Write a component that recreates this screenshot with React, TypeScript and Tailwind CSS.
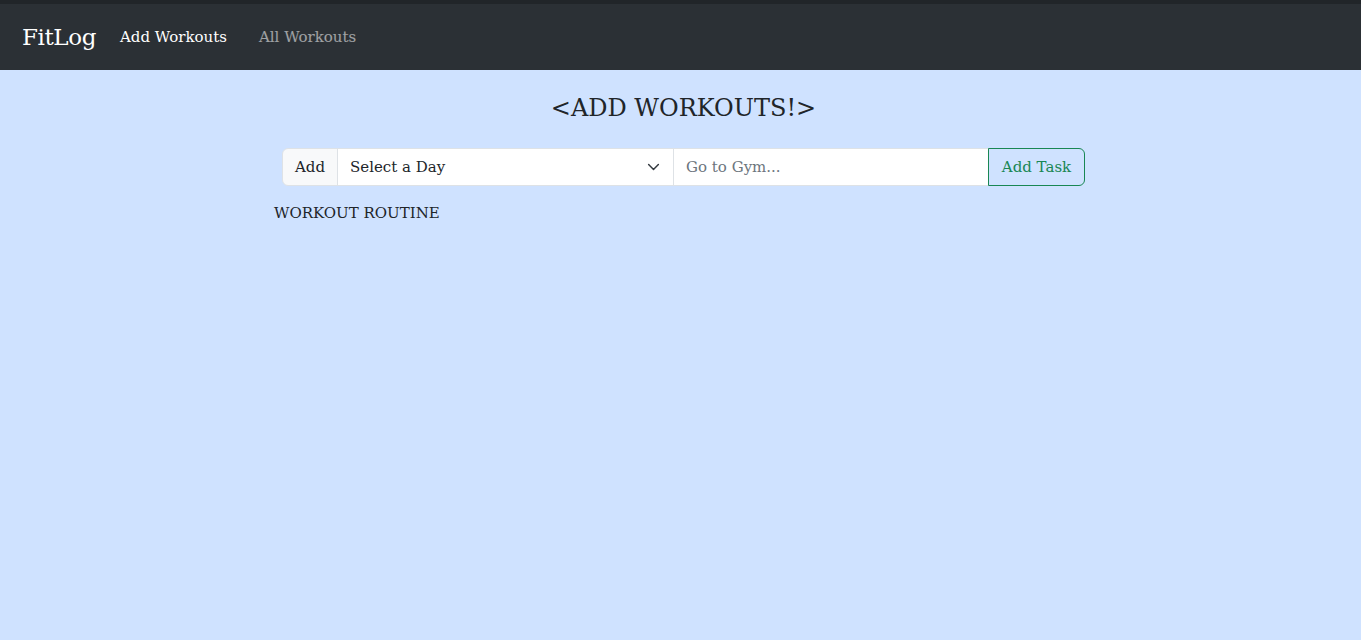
import React from "react";

const App: React.FC = () => {
  return (
    <div
      className="min-h-screen bg-[#cfe2ff] text-[#212529]"
      style={{ fontFamily: '"DejaVu Serif", "Liberation Serif", serif' }}
    >
      {/* Navbar */}
      <nav className="h-[70px] border-t-4 border-[#212529] bg-[#2b3035] flex items-center px-[22px]">
        <a className="text-[23px] text-white mr-6 tracking-[-0.4px]">FitLog</a>
        <div className="flex items-center gap-8 text-[15px]">
          <a className="text-white">Add Workouts</a>
          <a className="text-white/55">All Workouts</a>
        </div>
      </nav>

      {/* Main */}
      <main className="w-[809px] mx-auto pl-[6px] pt-[22px]">
        <h2 className="text-center text-[24px] leading-[32px] mb-[24px]">&lt;ADD WORKOUTS!&gt;</h2>

        <div className="flex h-[38px] text-[15px]">
          <span className="flex items-center px-3 pt-px bg-[#f8f9fa] border border-[#dee2e6] rounded-l-md">
            Add
          </span>
          <div className="relative w-[337px] -ml-px">
            <select className="w-full h-full appearance-none bg-white border border-[#dee2e6] pl-3 pr-9 pt-px outline-none">
              <option>Select a Day</option>
            </select>
            <svg
              className="absolute right-[14px] top-1/2 -translate-y-1/2 pointer-events-none"
              width="13"
              height="13"
              viewBox="0 0 16 16"
              fill="none"
              stroke="#343a40"
              strokeWidth="1.8"
              strokeLinecap="round"
              strokeLinejoin="round"
            >
              <path d="m2 5 6 6 6-6" />
            </svg>
          </div>
          <input
            className="flex-1 -ml-px bg-white border border-[#dee2e6] px-3 pt-px outline-none placeholder:text-[#6c757d]"
            placeholder="Go to Gym..."
          />
          <button className="w-[97px] -ml-px pt-px border border-[#198754] text-[#198754] rounded-r-md">
            Add Task
          </button>
        </div>

        <p className="-ml-2 mt-[16px] text-[15px]">WORKOUT ROUTINE</p>
      </main>
    </div>
  );
};

export default App;
